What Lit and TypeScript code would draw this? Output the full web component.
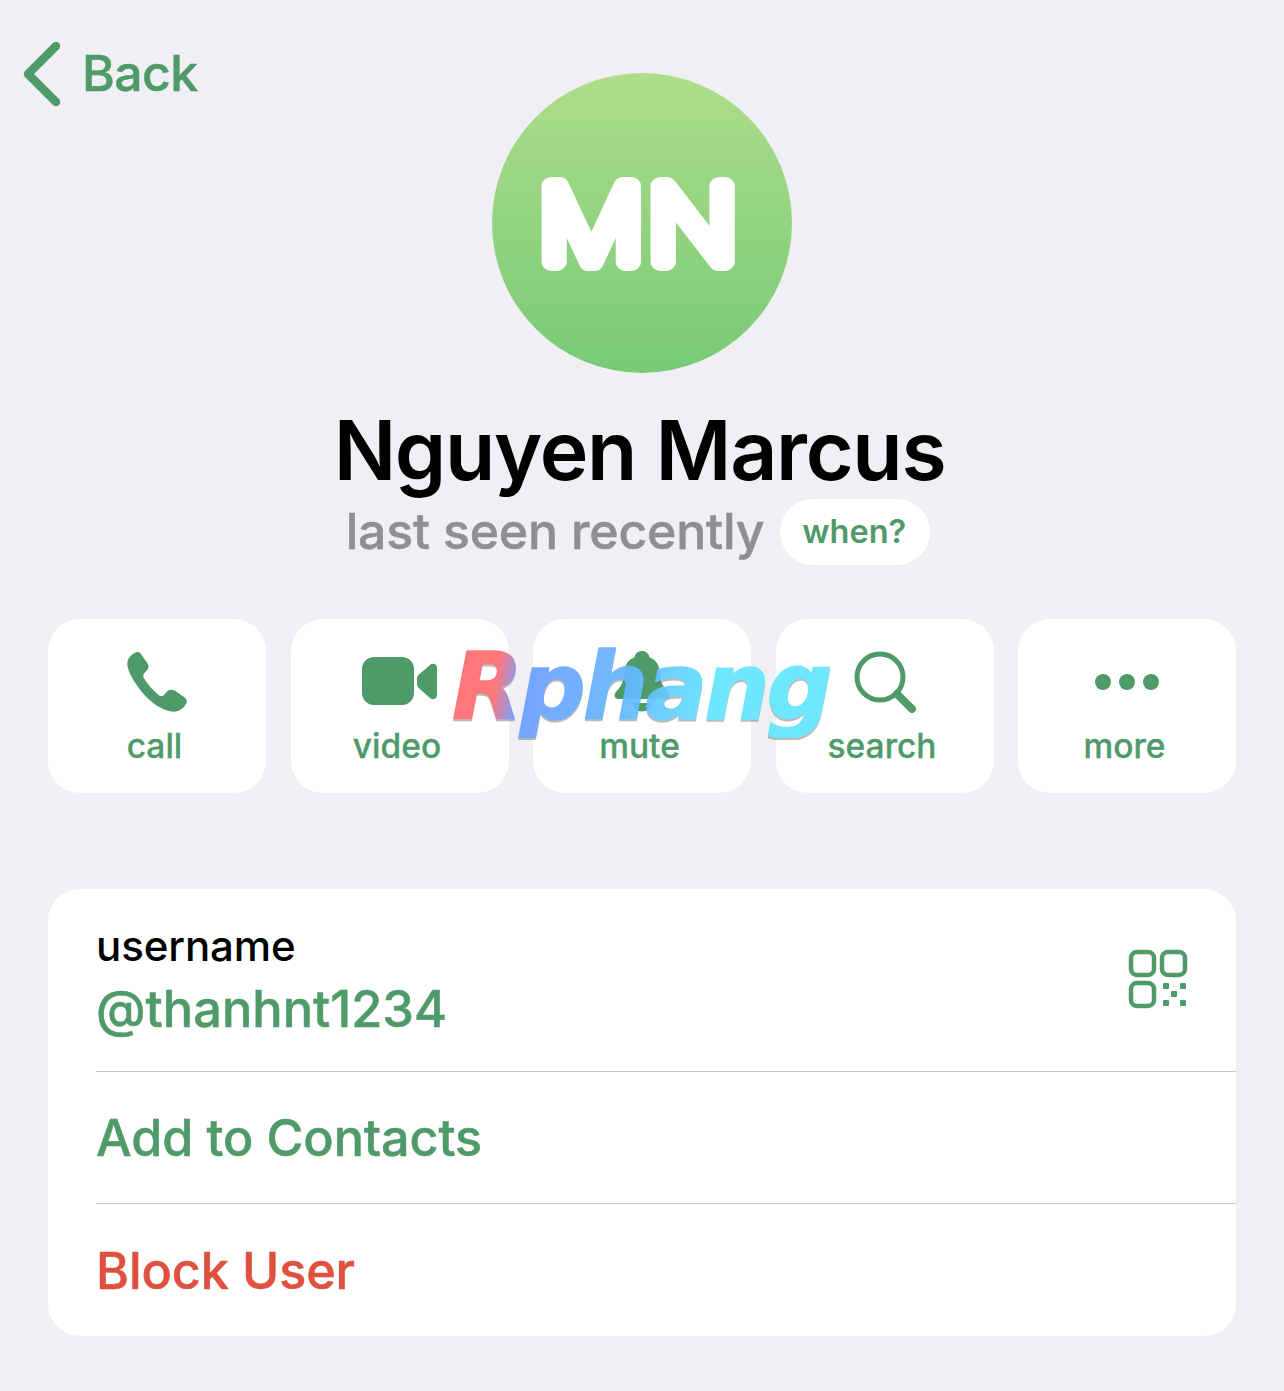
import { LitElement, html, css, svg } from "lit";
import { customElement } from "lit/decorators.js";

const phone = svg`<path d="M8.500 2C10.500.6 13.500.8 15 3l6.500 9.500c1.700 2.500 1.500 4.500-.5 6.700l-3 3.300c-1 1.100-1 2.500-.2 4.500C22 34 28 40 33 44.500c1.500 1.100 3 1.100 4.500 0L42 39.500c2.500-1.200 5-.9 7 .3L58 46c3 2 3.500 5 2 7-2.500 4.500-7 7.500-12 7.800C35 60 20 48.500 10 33 4 24 .5 16 1.500 11 1.500 8 5 4 8.500 2Z"/>`;

const icons: Record<string, unknown> = {
  call: html`<svg class="ic" style="width:62px;height:62px" viewBox="0 0 62 62" fill="#4f9a69">${phone}</svg>`,
  video: html`<svg class="ic" style="width:76px;height:50px" viewBox="0 0 76 50" fill="#4f9a69"><rect x="0" y="0" width="52" height="48" rx="12"/><path d="M55 21.500c0-1.500.6-2.800 1.700-3.800l11.600-9.900c2.600-2.200 6.700-.5 6.700 3v27.400c0 3.500-4.100 5.200-6.700 3L56.700 31c-1.100-1-1.700-2.300-1.700-3.800Z"/></svg>`,
  mute: html`<svg class="ic" style="width:56px;height:62px" viewBox="0 0 56 62" fill="#4f9a69"><path d="M28 0c4 0 7 2.500 7.500 6.500C43 9 45.500 15 46 23c.4 6 1.500 10.500 6 15.500 2 2.200 3.500 3.800 3.500 6 0 2-1.500 3.500-4 3.500H4.500C2 48 .5 46.500.5 44.500c0-2.200 1.500-3.800 3.500-6C8.500 33.500 9.600 29 10 23c.5-8 3-14 10.500-16.500C21 2.500 24 0 28 0Z"/><path d="M18.500 52h19c-.8 5-4.700 8.500-9.500 8.500S19.300 57 18.500 52Z"/></svg>`,
  search: html`<svg class="ic" style="width:62px;height:62px" viewBox="0 0 62 62" fill="none" stroke="#4f9a69" stroke-linecap="round"><circle cx="26" cy="26" r="23" stroke-width="5"/><path d="M43 43 58 58" stroke-width="8"/></svg>`,
  more: html`<svg class="ic" style="width:66px;height:18px" viewBox="0 0 66 18" fill="#4f9a69"><circle cx="9" cy="9" r="8"/><circle cx="33" cy="9" r="8"/><circle cx="57" cy="9" r="8"/></svg>`,
};

@customElement("app-root")
export class AppRoot extends LitElement {
  static styles = css`
    :host { display: block; position: relative; width: 1284px; height: 1391px; background: #efeff4; font-family: Inter, "Liberation Sans", sans-serif; overflow: hidden; color: #000; }
    .top { display: grid; grid-template-columns: 1fr 300px 1fr; padding-top: 42px; padding-left: 23px; padding-right: 24px; }
    .back { display: flex; align-items: flex-start; gap: 21px; color: #4f9a69; font-size: 50px; font-weight: 500; line-height: 62px; letter-spacing: -0.6px; -webkit-text-stroke: 0.5px #4f9a69; }
    .avatar { width: 300px; height: 300px; margin-top: 31px; border-radius: 50%; background: linear-gradient(180deg, #aedd8a, #78ca76); }
    .initials { display: block; width: 300px; height: 300px; }
    .initials text { font-family: Inter, sans-serif; font-size: 104px; font-weight: 200; fill: #fff; stroke: #fff; stroke-width: 18px; stroke-linejoin: round; text-anchor: middle; letter-spacing: 5px; }
    .name { text-align: center; font-size: 82.3px; font-weight: 600; line-height: 96px; margin-top: 29px; letter-spacing: -1.3px; margin-right: 5px; }
    .status { display: flex; justify-content: center; align-items: center; gap: 16px; margin-right: 8px; }
    .seen { font-size: 50px; color: #8e8e93; letter-spacing: -0.2px; line-height: 66px; font-weight: 500; padding-bottom: 2px; -webkit-text-stroke: 0.5px #8e8e93; }
    .when { height: 66px; width: 150px; display: flex; align-items: center; justify-content: center; background: #fff; border-radius: 33px; color: #4f9a69; font-size: 32.5px; font-weight: 600; padding-right: 2px; padding-bottom: 2px; box-sizing: border-box; }
    .actions { display: grid; grid-template-columns: repeat(5, 218px); column-gap: 24.5px; margin: 53px 48px 0; }
    .act { height: 174px; background: #fff; border-radius: 32px; display: grid; grid-template-rows: 91px 1fr; justify-items: center; color: #4f9a69; font-size: 33.5px; font-weight: 500; -webkit-text-stroke: 0.3px #4f9a69; }
    .slot { display: flex; align-items: center; justify-content: center; padding-top: 35px; height: 56px; }
    .lbl { line-height: 40px; margin-top: 16px; margin-right: 5px; }
    .card { margin: 96px 48px 0; background: #fff; border-radius: 32px; overflow: hidden; }
    .row { height: 131px; margin-left: 48px; display: flex; align-items: center; font-size: 50.3px; font-weight: 500; color: #4f9a69; border-top: 1px solid #c8c8cc; letter-spacing: -0.1px; -webkit-text-stroke: 0.5px #4f9a69; }
    .row.danger { height: 132px; color: #e0503e; -webkit-text-stroke: 0.5px #e0503e; }
    .user { height: 182px; margin-left: 48px; display: flex; justify-content: space-between; }
    .uinfo { padding-top: 32px; }
    .ulabel { font-size: 42px; font-weight: 500; line-height: 50px; color: #000; letter-spacing: -0.1px; }
    .uname { font-size: 50.5px; font-weight: 500; line-height: 62px; color: #4f9a69; margin-top: 7px; -webkit-text-stroke: 0.5px #4f9a69; }
    .qr { margin: 60px 48px 0 0; width: 60px; height: 60px; }
    .mark { position: absolute; left: 452px; top: 638px; font-family: "DejaVu Sans", sans-serif; font-weight: 700; font-style: italic; font-size: 92px; line-height: 100px; letter-spacing: -3px; background: linear-gradient(100deg, #ff6b70 0 13%, #6d9bff 19%, #63b6ff 45%, #63e6ff 70%); -webkit-background-clip: text; background-clip: text; color: transparent; -webkit-text-stroke: 1.5px transparent; opacity: 0.92; filter: drop-shadow(0 2px 0 rgba(90, 90, 90, 0.45)); }
  `;

  render() {
    const acts = ["call", "video", "mute", "search", "more"];
    return html`
      <div class="top">
        <div class="back">
          <svg width="38" height="64" viewBox="0 0 38 64" fill="none" stroke="#4f9a69" stroke-width="8.500" stroke-linecap="round" stroke-linejoin="round"><path d="M33 4 5 32l28 28"/></svg>
          <span>Back</span>
        </div>
        <div class="avatar"><svg class="initials" viewBox="0 0 300 300"><text transform="translate(149 189) scale(1.11 1)">MN</text></svg></div>
        <div></div>
      </div>
      <div class="name">Nguyen Marcus</div>
      <div class="status"><span class="seen">last seen recently</span><span class="when">when?</span></div>
      <div class="actions">
        ${acts.map((a) => html`<div class="act"><div class="slot">${icons[a]}</div><div class="lbl">${a}</div></div>`)}
      </div>
      <div class="card">
        <div class="user">
          <div class="uinfo"><div class="ulabel">username</div><div class="uname">@thanhnt1234</div></div>
          <svg class="qr" viewBox="0 0 60 60" fill="none" stroke="#4f9a69" stroke-width="4.500">
            <rect x="3" y="3" width="23" height="23" rx="6"/><rect x="34" y="3" width="23" height="23" rx="6"/><rect x="3" y="34" width="23" height="23" rx="6"/>
            <g fill="#4f9a69" stroke="none"><rect x="35" y="34" width="6" height="6" rx="1"/><rect x="52" y="34" width="6" height="6" rx="1"/><rect x="43" y="42" width="6" height="6" rx="1"/><rect x="35" y="51" width="6" height="6" rx="1"/><rect x="52" y="51" width="6" height="6" rx="1"/></g>
          </svg>
        </div>
        <div class="row">Add to Contacts</div>
        <div class="row danger">Block User</div>
      </div>
      <div class="mark">Rphang</div>
    `;
  }
}
